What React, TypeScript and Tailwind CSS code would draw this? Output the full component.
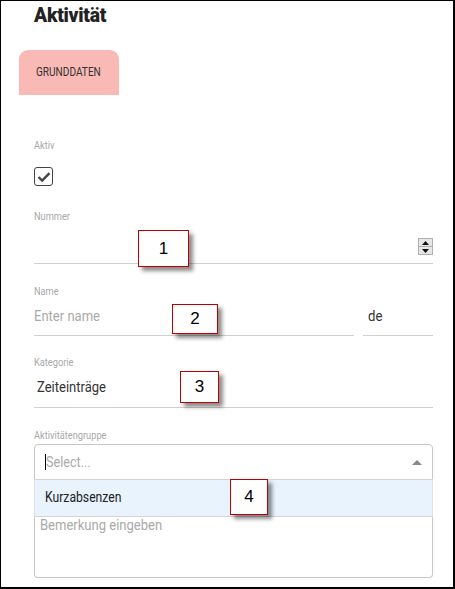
import React from "react";

const rob = { fontFamily: 'Roboto, "Liberation Sans", sans-serif' };

function C({ children, className = "" }: { children: React.ReactNode; className?: string }) {
  return <span className={`inline-block origin-left scale-x-[0.84] whitespace-nowrap ${className}`}>{children}</span>;
}

function Callout({ n, className }: { n: string; className: string }) {
  return (
    <div
      className={`absolute bg-white border border-[#c00000] flex items-center justify-center text-[17px] text-black shadow-[4px_4px_4px_rgba(0,0,0,0.45)] ${className}`}
      style={{ fontFamily: '"Liberation Sans", Arial, sans-serif' }}
    >
      {n}
    </div>
  );
}

function Label({ text, mt }: { text: string; mt: string }) {
  return (
    <div className={`${mt} h-[13px] text-[11px] leading-[13px] text-[#a8a8a8]`}>
      <C>{text}</C>
    </div>
  );
}

export default function App() {
  return (
    <div className="relative w-[455px] h-[589px] bg-white border-t border-l border-r-2 border-b-2 border-black overflow-hidden" style={rob}>
      <div className="pl-[18px]">
        <h1 className="pl-[15px] pt-[3px] h-[30px] text-[21px] leading-[22px] font-black text-[#222]">
          <span className="inline-block origin-left scale-x-[0.92] tracking-[-0.3px]">Aktivität</span>
        </h1>
        <div className="mt-[19px] w-[100px] h-[45px] bg-[#f9b9b5] rounded-t-[9px] flex items-center pl-[17px]">
          <span className="text-[12px] text-[#333] pb-[1px]">
            <C className="scale-x-[0.83]">GRUNDDATEN</C>
          </span>
        </div>

        <div className="pl-[15px] w-[414px]">
          {/* Aktiv */}
          <Label text="Aktiv" mt="mt-[44px]" />
          <div className="mt-[15px] w-[19px] h-[19px] border-[1.5px] border-[#444] rounded-[3px] flex items-center justify-center">
            <svg width="14" height="12" viewBox="0 0 14 12">
              <path d="M1.5 6 L5.2 9.6 L12.5 2.2" fill="none" stroke="#444" strokeWidth="2.4" />
            </svg>
          </div>

          {/* Nummer */}
          <Label text="Nummer" mt="mt-[24px]" />
          <div className="h-[41px] border-b border-[#d0d0d0] flex items-end justify-end pb-[8px]">
            <div className="w-[15px] h-[17px] border border-[#b0b0b0] bg-[#e6e6e6] flex flex-col">
              <div className="flex-1 flex items-center justify-center border-b border-[#b0b0b0]">
                <svg width="7" height="4" viewBox="0 0 7 4"><path d="M0 4 L3.5 0 L7 4 Z" fill="#111" /></svg>
              </div>
              <div className="flex-1 flex items-center justify-center">
                <svg width="7" height="4" viewBox="0 0 7 4"><path d="M0 0 L3.5 4 L7 0 Z" fill="#111" /></svg>
              </div>
            </div>
          </div>

          {/* Name */}
          <Label text="Name" mt="mt-[21px]" />
          <div className="flex gap-[9px]">
            <div className="w-[320px] h-[38px] border-b border-[#d0d0d0] flex items-center text-[15.5px] text-[#aaa]">
              <C className="scale-x-[0.81]">Enter name</C>
            </div>
            <div className="flex-1 h-[38px] border-b border-[#d0d0d0] flex items-center pl-[5px] text-[15.5px] text-[#333]">
              <C className="scale-x-[0.85]">de</C>
            </div>
          </div>

          {/* Kategorie */}
          <Label text="Kategorie" mt="mt-[20px]" />
          <div className="h-[39px] border-b border-[#d0d0d0] flex items-center pl-[3px] text-[15.5px] text-[#333]">
            <C className="scale-x-[0.82]">Zeiteinträge</C>
          </div>

          {/* Aktivitätengruppe */}
          <Label text="Aktivitätengruppe" mt="mt-[21px]" />
          <div className="relative mt-[2px]">
            <div className="h-[36px] border border-[#c8c8c8] rounded-t-[4px] flex items-center pl-[10px] pr-[10px]">
              <span className="w-px h-[16px] bg-black" />
              <span className="flex-1 text-[15px] text-[#aaa]">
                <C className="scale-x-[0.82]">Select...</C>
              </span>
              <svg width="10" height="5" viewBox="0 0 10 5"><path d="M0 5 L5 0 L10 5 Z" fill="#888" /></svg>
            </div>
            <div className="h-[98px] border border-t-0 border-[#c8c8c8] rounded-b-[4px] pl-[5px] pt-[35px] text-[15.5px] text-[#aaa] leading-[20px]">
              <C className="scale-x-[0.8]">Bemerkung eingeben</C>
            </div>
            <div className="absolute left-0 right-0 top-[35px] h-[38px] bg-[#e8f3fe] border-y border-[#d4d4d4] border-x border-x-[#e0e0e0] flex items-center pl-[10px] text-[14.5px] text-[#222]">
              <C className="scale-x-[0.84]">Kurzabsenzen</C>
            </div>
          </div>
        </div>
      </div>

      <Callout n="1" className="left-[137px] top-[229px] w-[51px] h-[37px]" />
      <Callout n="2" className="left-[171px] top-[303px] w-[46px] h-[30px]" />
      <Callout n="3" className="left-[179px] top-[370px] w-[39px] h-[32px]" />
      <Callout n="4" className="left-[229px] top-[478px] w-[38px] h-[36px]" />
    </div>
  );
}
